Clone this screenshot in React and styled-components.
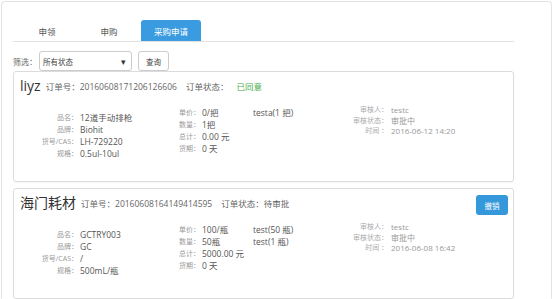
import React from "react";
import styled, { createGlobalStyle } from "styled-components";

const Global = createGlobalStyle`
  html, body { margin: 0; padding: 0; background: #fff; }
  body { font-family: "Open Sans", "Noto Sans CJK SC", sans-serif; color: #555; }
  * { box-sizing: border-box; }
`;

const Frame = styled.div`
  margin: 1px 0 0 1px;
  width: 551px;
  height: 298px;
  border: 1px solid #e3e3e3;
  border-bottom-color: transparent;
  border-radius: 4px 4px 0 0;
  padding: 18px 37px 0 11px;
`;

const TabBar = styled.div`
  display: flex;
  gap: 2px;
  padding-left: 4px;
  border-bottom: 1px solid #e2e2e2;
`;

const Tab = styled.div`
  width: 60px;
  height: 21px;
  display: flex;
  align-items: center;
  justify-content: center;
  font-size: 8.5px;
  border-radius: 3px 3px 0 0;
  color: ${(p) => (p.$active ? "#fff" : "#555")};
  background: ${(p) => (p.$active ? "#3a9be0" : "transparent")};
`;

const FilterRow = styled.div`
  display: flex;
  align-items: center;
  margin-top: 9px;
  height: 20px;
`;

const FilterLabel = styled.span`
  font-size: 8px;
  color: #666;
  width: 26px;
`;

const Select = styled.div`
  width: 93px;
  height: 20px;
  border: 1px solid #ccc;
  border-radius: 3px;
  display: flex;
  align-items: center;
  justify-content: space-between;
  padding: 0 5px 0 3px;
  font-size: 7.5px;
  color: #444;
`;

const Arrow = styled.span`
  font-size: 9px;
  line-height: 1;
  color: #333;
`;

const Button = styled.div`
  margin-left: 6px;
  width: 31px;
  height: 20px;
  border: 1px solid #ccc;
  border-radius: 3px;
  display: flex;
  align-items: center;
  justify-content: center;
  font-size: 7.5px;
  color: #444;
  background: #fff;
`;

const Cards = styled.div`
  display: flex;
  flex-direction: column;
  gap: 6px;
`;

const Card = styled.div`
  width: 501px;
  height: 111px;
  border: 1px solid #dcdcdc;
  border-radius: 3px;
  padding: 5px 5px 0 6px;
  box-shadow: 0 1px 1px rgba(0, 0, 0, 0.04);
`;

const Header = styled.div`
  display: flex;
  align-items: center;
  height: 18px;
`;

const Title = styled.span`
  font-size: 14px;
  line-height: 18px;
  color: #333;
  margin-right: 5px;
`;

const Meta = styled.span`
  font-size: 8.5px;
  color: #666;
  margin-right: 9px;
`;

const Status = styled.span`
  color: ${(p) => p.$color || "#666"};
  margin-left: ${(p) => (p.$gap ? "8px" : "0")};
`;

const Revoke = styled.div`
  margin-left: auto;
  align-self: flex-start;
  margin-top: 1px;
  width: 32px;
  height: 20px;
  border-radius: 3px;
  background: #3498db;
  color: #fff;
  font-size: 7.5px;
  display: flex;
  align-items: center;
  justify-content: center;
  flex-shrink: 0;
`;

const Body = styled.div`
  display: flex;
`;

const Pairs = styled.div`
  display: grid;
  grid-template-columns: ${(p) => p.$cols};
  column-gap: ${(p) => p.$gap || "2px"};
  align-content: start;
  width: ${(p) => p.$width || "auto"};
  margin-top: ${(p) => p.$top};
  line-height: ${(p) => p.$lh || "12px"};
`;

const Label = styled.span`
  font-size: 7px;
  color: ${(p) => (p.$light ? "#aaa" : "#999")};
  text-align: right;
  white-space: nowrap;
`;

const Value = styled.span`
  font-size: ${(p) => (p.$small ? "8px" : "8.5px")};
  color: ${(p) => (p.$light ? "#999" : "#555")};
  white-space: nowrap;
`;

const Column = styled.div`
  display: flex;
  flex-direction: column;
  width: ${(p) => p.$width};
  margin-top: ${(p) => p.$top};
  line-height: 12px;
`;

const orders = [
  {
    title: "liyz",
    no: "20160608171206126606",
    status: "已同意",
    approved: true,
    item: [
      ["品名：", "12道手动排枪"],
      ["品牌：", "Biohit"],
      ["货号/CAS：", "LH-729220"],
      ["规格：", "0.5ul-10ul"],
    ],
    price: [
      ["单价：", "0/把"],
      ["数量：", "1把"],
      ["总计：", "0.00 元"],
      ["货期：", "0 天"],
    ],
    users: ["testa(1 把)"],
    review: [
      ["审核人：", "testc"],
      ["审核状态：", "审批中"],
      ["时间 ：", "2016-06-12 14:20"],
    ],
  },
  {
    title: "海门耗材",
    no: "20160608164149414595",
    status: "待审批",
    approved: false,
    item: [
      ["品名：", "GCTRY003"],
      ["品牌：", "GC"],
      ["货号/CAS：", "/"],
      ["规格：", "500mL/瓶"],
    ],
    price: [
      ["单价：", "100/瓶"],
      ["数量：", "50瓶"],
      ["总计：", "5000.00 元"],
      ["货期：", "0 天"],
    ],
    users: ["test(50 瓶)", "test(1 瓶)"],
    review: [
      ["审核人：", "testc"],
      ["审核状态：", "审批中"],
      ["时间 ：", "2016-06-08 16:42"],
    ],
  },
];

function OrderCard({ o }) {
  return (
    <Card>
      <Header>
        <Title>{o.title}</Title>
        <Meta>订单号：{o.no}</Meta>
        <Meta>
          订单状态：
          {o.approved ? (
            <Status $color="#4cae4c" $gap>{o.status}</Status>
          ) : (
            <Status>{o.status}</Status>
          )}
        </Meta>
        {!o.approved && <Revoke>撤销</Revoke>}
      </Header>
      <Body>
        <Pairs $cols="58px auto" $width="158px" $top="17px">
          {o.item.map(([l, v]) => (
            <React.Fragment key={l}>
              <Label>{l}</Label>
              <Value>{v}</Value>
            </React.Fragment>
          ))}
        </Pairs>
        <Pairs $cols="22px auto" $width="75px" $top="12px">
          {o.price.map(([l, v]) => (
            <React.Fragment key={l}>
              <Label>{l}</Label>
              <Value>{v}</Value>
            </React.Fragment>
          ))}
        </Pairs>
        <Column $width="95px" $top="12px">
          {o.users.map((u) => (
            <Value key={u}>{u}</Value>
          ))}
        </Column>
        <Pairs $cols="40px auto" $gap="3px" $top="10px" $lh="10.5px">
          {o.review.map(([l, v]) => (
            <React.Fragment key={l}>
              <Label $light>{l}</Label>
              <Value $small $light>{v}</Value>
            </React.Fragment>
          ))}
        </Pairs>
      </Body>
    </Card>
  );
}

export default function App() {
  return (
    <>
      <Global />
      <Frame>
        <TabBar>
          <Tab>申领</Tab>
          <Tab>申购</Tab>
          <Tab $active>采购申请</Tab>
        </TabBar>
        <FilterRow>
          <FilterLabel>筛选：</FilterLabel>
          <Select>
            <span>所有状态</span>
            <Arrow>▾</Arrow>
          </Select>
          <Button>查询</Button>
        </FilterRow>
        <Cards>
          {orders.map((o) => (
            <OrderCard key={o.no} o={o} />
          ))}
        </Cards>
      </Frame>
    </>
  );
}
